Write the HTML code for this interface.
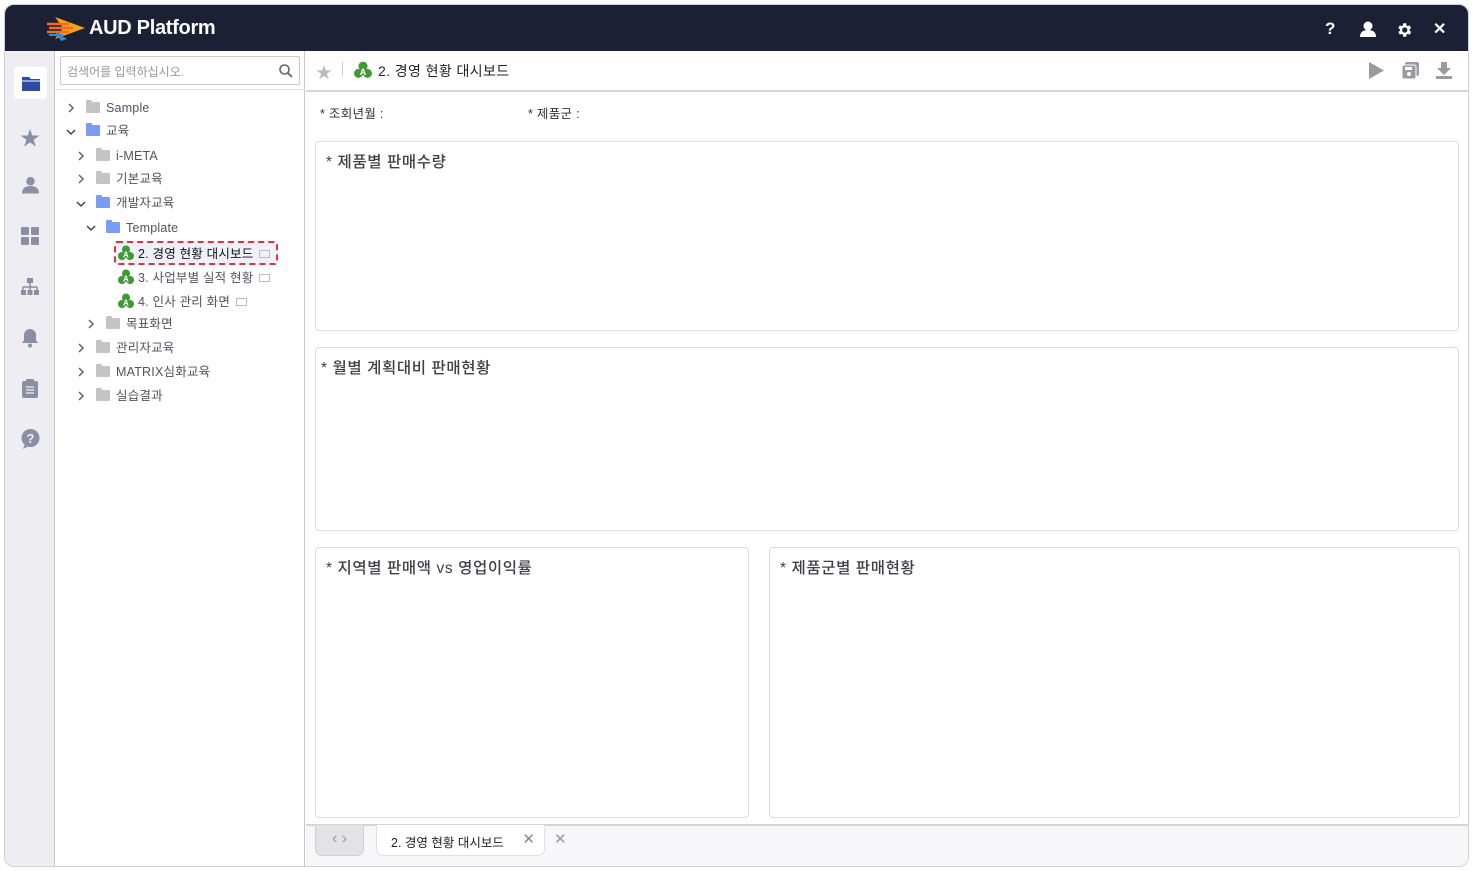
<!DOCTYPE html>
<html><head><meta charset="utf-8"><style>
*{box-sizing:border-box;margin:0;padding:0}
body{width:1473px;height:871px;background:#fff;font-family:"Liberation Sans","Noto Sans CJK KR",sans-serif;position:relative;overflow:hidden}
.win{position:absolute;left:4px;top:4px;width:1465px;height:863px;border:1px solid #cfcfd4;border-radius:10px;overflow:hidden;background:#fff}
.hdr{position:absolute;left:0;top:0;width:100%;height:46px;background:#1b2035;color:#fff}
.logo{position:absolute;left:84px;top:12px;font-size:20px;font-weight:bold;letter-spacing:-0.3px}
.side{position:absolute;left:0;top:46px;width:50px;bottom:0;background:#eeedf2;border-right:1px solid #c8c8cc}
.tree{position:absolute;left:50px;top:46px;width:250px;bottom:0;border-right:1px solid #c8c8cc;background:#fff}
.srch{position:absolute;left:5px;top:5px;width:240px;height:29px;border:1px solid #c9c9ce;border-radius:2px;font-size:12px;color:#999;padding:6px 6px}
.trline{position:absolute;left:0;top:38px;width:250px;border-top:1px solid #ddd}
.it{position:absolute;font-size:12.5px;color:#55515f;white-space:nowrap;height:16px;line-height:16px;letter-spacing:0.2px}
.chev{position:absolute;width:10px;height:10px}
.fold{display:inline-block;width:14px;height:11px;background:#c4c4c6;vertical-align:-1px;margin-right:6px;position:relative;border-radius:1px}
.fold::before{content:"";position:absolute;left:0;top:-2px;width:6px;height:3px;background:inherit;border-radius:1px 1px 0 0}
.fold.b{background:#7b9cf4}
.main{position:absolute;left:301px;top:46px;right:0;bottom:0;background:#fff}
.tbar{position:absolute;left:0;top:0;right:0;height:41px;border-bottom:2px solid #d6d6d9}
.pn{position:absolute;border:1px solid #dcdcdc;border-radius:4px;background:#fff}
.pt{position:absolute;left:10px;top:8px;font-size:15.5px;color:#3f3f48;letter-spacing:0.6px;font-weight:500}
.bot{position:absolute;left:0;right:0;bottom:0;height:42px;background:#f7f7f9;border-top:2px solid #d4d4d8}
.ic{display:inline-block;vertical-align:-3px;margin-right:4px}
.dk{display:inline-block;width:11px;height:8px;border:1.5px solid #bbb;margin-left:6px;vertical-align:0}
</style></head><body>
<svg width="0" height="0" style="position:absolute"><defs><g id="g"><circle cx="8" cy="4.5" r="4" fill="#3f9a35"/><circle cx="4" cy="11" r="4" fill="#3f9a35"/><circle cx="12" cy="11" r="4" fill="#3f9a35"/><circle cx="8" cy="9" r="3.5" fill="#3f9a35"/><text x="8" y="12.5" font-size="8" font-weight="bold" fill="#fff" text-anchor="middle" font-family="Liberation Sans">A</text></g>
<path id="cr" d="M3 1l4 4-4 4" stroke="#666" stroke-width="1.5" fill="none"/><path id="cd" d="M1 3l4 4 4-4" stroke="#444" stroke-width="1.5" fill="none"/></defs></svg>
<div class="win">
<div class="hdr">
<svg style="position:absolute;left:42px;top:10px" width="38" height="26" viewBox="0 0 38 26"><path d="M8 2 L38 13 L8 24 L16 13Z" fill="#f6a11b"/><path d="M0 9 H22 M2 13 H26 M0 17 H22" stroke="#f46b1f" stroke-width="2.5"/><path d="M8 17 L20 24 L14 26Z" fill="#2d8de0"/><path d="M2 20 H16" stroke="#2d8de0" stroke-width="2"/></svg>
<div class="logo">AUD Platform</div>
<div style="position:absolute;left:1320px;top:14px;font-size:17px;font-weight:bold">?</div>
<svg style="position:absolute;left:1354px;top:16px" width="18" height="16" viewBox="0 0 18 16"><circle cx="9" cy="5" r="4.5" fill="#fff"/><path d="M1 16 Q1 9 9 9 Q17 9 17 16Z" fill="#fff"/></svg>
<svg style="position:absolute;left:1390px;top:16px" width="18" height="18" viewBox="0 0 24 24"><path fill="#fff" d="M19.4 13a7.5 7.5 0 0 0 0-2l2.1-1.6-2-3.5-2.5 1a7 7 0 0 0-1.7-1L15 3h-4l-.4 2.9a7 7 0 0 0-1.7 1l-2.5-1-2 3.5L6.6 11a7.5 7.5 0 0 0 0 2l-2.1 1.6 2 3.5 2.5-1a7 7 0 0 0 1.7 1L11 21h4l.4-2.9a7 7 0 0 0 1.7-1l2.5 1 2-3.5zM13 15.5a3.5 3.5 0 1 1 0-7 3.5 3.5 0 0 1 0 7z"/></svg>
<div style="position:absolute;left:1428px;top:14px;font-size:16px;font-weight:bold">✕</div>
</div>
<div class="side">
<div style="position:absolute;left:9px;top:16px;width:33px;height:32px;background:#fff;border-radius:4px"></div>
<svg style="position:absolute;left:17px;top:25px" width="18" height="15" viewBox="0 0 18 15"><path d="M0 1h7l2 2h9v12H0z" fill="#2e4aa8"/><path d="M0 5h18" stroke="#fff" stroke-width="1"/></svg>
<div style="position:absolute;left:15px;top:71px;font-size:20px;color:#8a8fa3">★</div>
<svg style="position:absolute;left:17px;top:125px" width="17" height="18" viewBox="0 0 18 18"><circle cx="9" cy="5" r="4.5" fill="#8a8fa3"/><path d="M0 18 Q0 10 9 10 Q18 10 18 18Z" fill="#8a8fa3"/></svg>
<svg style="position:absolute;left:16px;top:176px" width="18" height="18"><rect x="0" y="0" width="8" height="8" rx="1" fill="#8a8fa3"/><rect x="10" y="0" width="8" height="8" rx="1" fill="#8a8fa3"/><rect x="0" y="10" width="8" height="8" rx="1" fill="#8a8fa3"/><rect x="10" y="10" width="8" height="8" rx="1" fill="#8a8fa3"/></svg>
<svg style="position:absolute;left:16px;top:227px" width="18" height="18"><rect x="6" y="0" width="6" height="5" fill="#8a8fa3"/><path d="M9 5v4M2 9h14M2 9v3M9 9v3M16 9v3" stroke="#8a8fa3" stroke-width="1.5" fill="none"/><rect x="0" y="12" width="5" height="5" fill="#8a8fa3"/><rect x="6.5" y="12" width="5" height="5" fill="#8a8fa3"/><rect x="13" y="12" width="5" height="5" fill="#8a8fa3"/></svg>
<svg style="position:absolute;left:16px;top:277px" width="18" height="20" viewBox="0 0 18 20"><path d="M9 1a6 6 0 0 0-6 6v5l-2 3h16l-2-3V7a6 6 0 0 0-6-6z" fill="#8a8fa3"/><circle cx="9" cy="17.5" r="2" fill="#8a8fa3"/></svg>
<svg style="position:absolute;left:17px;top:328px" width="16" height="19"><rect x="0" y="2" width="16" height="17" rx="2" fill="#8a8fa3"/><rect x="4" y="0" width="8" height="4" rx="1" fill="#8a8fa3"/><path d="M4 8h8M4 11h8M4 14h8" stroke="#eeedf2" stroke-width="1.3"/></svg>
<svg style="position:absolute;left:16px;top:378px" width="19" height="20" viewBox="0 0 19 20"><circle cx="9.5" cy="9" r="9" fill="#8a8fa3"/><path d="M4 15l-2 5 6-3z" fill="#8a8fa3"/><text x="9.5" y="14" font-size="13" font-weight="bold" text-anchor="middle" fill="#eeedf2" font-family="Liberation Sans">?</text></svg>
</div>
<div class="tree">
<div class="srch">검색어를 입력하십시오.</div>
<svg style="position:absolute;left:224px;top:13px" width="14" height="14"><circle cx="5.5" cy="5.5" r="4.5" stroke="#666" stroke-width="1.6" fill="none"/><path d="M9 9l4 4" stroke="#666" stroke-width="1.8"/></svg>
<div class="trline"></div>
<svg class="chev" style="left:11px;top:52px"><use href="#cr"/></svg><div class="it" style="left:31px;top:49px"><span class="fold"></span>Sample</div>
<svg class="chev" style="left:11px;top:76px"><use href="#cd"/></svg><div class="it" style="left:31px;top:72px"><span class="fold b"></span>교육</div>
<svg class="chev" style="left:21px;top:100px"><use href="#cr"/></svg><div class="it" style="left:41px;top:97px"><span class="fold"></span>i-META</div>
<svg class="chev" style="left:21px;top:123px"><use href="#cr"/></svg><div class="it" style="left:41px;top:120px"><span class="fold"></span>기본교육</div>
<svg class="chev" style="left:21px;top:148px"><use href="#cd"/></svg><div class="it" style="left:41px;top:144px"><span class="fold b"></span>개발자교육</div>
<svg class="chev" style="left:31px;top:172px"><use href="#cd"/></svg><div class="it" style="left:51px;top:169px"><span class="fold b"></span>Template</div>
<div style="position:absolute;left:59px;top:190px;width:164px;height:24px;border:2px dashed #e0323a;border-radius:3px;background:#eef0fb"></div>
<div class="it" style="left:63px;top:194px;color:#111"><svg class="ic" width="16" height="16"><use href="#g"/></svg>2. 경영 현황 대시보드<span class="dk"></span></div>
<div class="it" style="left:63px;top:218px"><svg class="ic" width="16" height="16"><use href="#g"/></svg>3. 사업부별 실적 현황<span class="dk"></span></div>
<div class="it" style="left:63px;top:242px"><svg class="ic" width="16" height="16"><use href="#g"/></svg>4. 인사 관리 화면<span class="dk"></span></div>
<svg class="chev" style="left:31px;top:268px"><use href="#cr"/></svg><div class="it" style="left:51px;top:265px"><span class="fold"></span>목표화면</div>
<svg class="chev" style="left:21px;top:292px"><use href="#cr"/></svg><div class="it" style="left:41px;top:289px"><span class="fold"></span>관리자교육</div>
<svg class="chev" style="left:21px;top:316px"><use href="#cr"/></svg><div class="it" style="left:41px;top:313px"><span class="fold"></span>MATRIX심화교육</div>
<svg class="chev" style="left:21px;top:340px"><use href="#cr"/></svg><div class="it" style="left:41px;top:337px"><span class="fold"></span>실습결과</div>
</div>
<div class="main">
<div class="tbar">
<div style="position:absolute;left:10px;top:8px;font-size:16px;color:#bbb">★</div>
<div style="position:absolute;left:36px;top:11px;height:14px;border-left:1px solid #ccc"></div>
<svg style="position:absolute;left:48px;top:10px" width="18" height="18" viewBox="0 0 16 16"><use href="#g"/></svg>
<div style="position:absolute;left:72px;top:10px;font-size:14px;color:#222;letter-spacing:0.4px">2. 경영 현황 대시보드</div>
<svg style="position:absolute;left:1062px;top:11px" width="16" height="17"><path d="M1 0L16 8.5L1 17Z" fill="#9a9aa0"/></svg>
<svg style="position:absolute;left:1096px;top:11px" width="17" height="17"><rect x="3" y="0" width="14" height="14" rx="2" fill="#9a9aa0"/><rect x="0" y="3" width="14" height="14" rx="2" fill="#9a9aa0" stroke="#fff" stroke-width="1"/><rect x="3" y="5" width="7" height="3" fill="#fff"/><circle cx="7" cy="12" r="2" fill="#fff"/></svg>
<svg style="position:absolute;left:1130px;top:11px" width="16" height="17"><path d="M5 0h6v6h4l-7 7-7-7h4z" fill="#9a9aa0"/><rect x="0" y="14" width="16" height="3" fill="#9a9aa0"/></svg>
</div>
<div style="position:absolute;left:14px;top:52px;font-size:12.5px;color:#333;letter-spacing:0.3px">* 조회년월 :</div>
<div style="position:absolute;left:222px;top:52px;font-size:12.5px;color:#333;letter-spacing:0.3px">* 제품군 :</div>
<div class="pn" style="left:9px;top:90px;width:1144px;height:190px"><div class="pt">* 제품별 판매수량</div></div>
<div class="pn" style="left:9px;top:296px;width:1144px;height:184px"><div class="pt" style="left:5px">* 월별 계획대비 판매현황</div></div>
<div class="pn" style="left:9px;top:496px;width:434px;height:271px"><div class="pt">* 지역별 판매액 vs 영업이익률</div></div>
<div class="pn" style="left:463px;top:496px;width:691px;height:271px"><div class="pt">* 제품군별 판매현황</div></div>
<div class="bot">
<div style="position:absolute;left:9px;top:-1px;width:49px;height:31px;background:#e3e3e7;border:1px solid #cfcfd4;border-top:none;border-radius:0 0 7px 7px;font-size:16px;color:#999;text-align:center;line-height:28px">‹ ›</div>
<div style="position:absolute;left:70px;top:-1px;width:169px;height:31px;background:#fff;border:1px solid #e0e0e4;border-top:none;border-radius:0 0 7px 7px;font-size:12.5px;color:#222;padding:7px 0 0 14px">2. 경영 현황 대시보드<span style="position:absolute;right:9px;top:5px;color:#888;font-size:15px">✕</span></div>
<div style="position:absolute;left:248px;top:4px;color:#999;font-size:15px">✕</div>
</div>
</div>
</div>
</body></html>
